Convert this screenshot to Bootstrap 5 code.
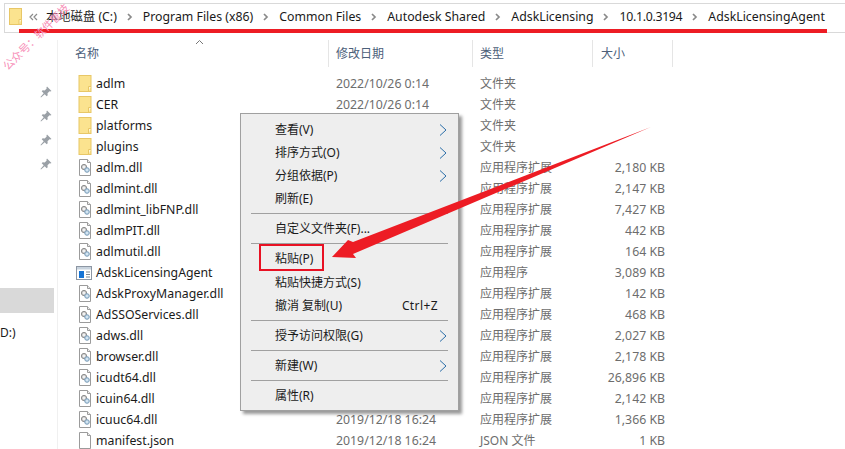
<!DOCTYPE html>
<html lang="zh">
<head>
<meta charset="utf-8">
<title>AdskLicensingAgent</title>
<link href="https://cdn.jsdelivr.net/npm/bootstrap@5.3.0/dist/css/bootstrap.min.css" rel="stylesheet">
<style>
html,body{height:449px;overflow:hidden;background:#fff}
body{font-family:"Noto Sans","Noto Sans CJK SC",sans-serif;font-size:12px;line-height:21px;color:#1a1a1a;position:relative}
.addr{margin:3px 0 0 4px;height:30px;border:1px solid #d9d9d9;border-right:0;padding:0 0 3px 4px;font-size:12.3px;color:#1a1a1a;white-space:nowrap}
.addr .fold{margin-right:7px}
.crumb-sep{width:6px;margin:0 10px;flex:none}
.crumb-first{width:9px;margin:0 8px 0 0;flex:none}
.crumb-ver{letter-spacing:-.3px}
.pane{height:416px}
.side{width:58px;flex:none;border-right:1px solid #f0f0f0;margin-top:7px;position:relative}
.pin-col{padding:46px 5px 0 0;gap:12px}
.pin-col svg{display:block}
.side-sel{height:25px;background:#d9d9d9;width:54px;margin-top:118px}
.side-d{margin-top:9px;line-height:21px}
.list{flex:1;min-width:0;margin-top:7px}
.head{height:27px;color:#4c607a;position:relative}
.cell-n{width:271px;padding-left:17px;flex:none}
.cell-d{width:144px;padding-left:7px;flex:none}
.cell-t{width:120px;padding-left:7px;flex:none}
.cell-s{width:80px;padding-right:8px;text-align:right;flex:none}
.head>div{border-right:1px solid #e5e5e5;height:27px;line-height:28px}
.caret-up{position:absolute;left:137px;top:-1px}
.rows{margin-top:6px}
.frow{height:21px;white-space:nowrap;font-size:12.3px}
.frow .cell-d,.frow .cell-t,.frow .cell-s{color:#6d6d6d}
.frow .cell-t{font-size:12px}
.frow .cell-n{display:flex;align-items:center;padding-left:20px}
.ico{width:14px;height:17px;flex:none;margin-right:4px}
.ico-app{width:16px;height:14px;margin-left:-2px;margin-right:4px;flex:none}
.cmenu{position:absolute;left:240px;top:113px;width:219px;height:298px;background:#eee;border:1px solid #a0a0a0;box-shadow:3px 3px 3px rgba(0,0,0,.4);padding:4px 0 0 0;z-index:2}
.mi{height:23px;line-height:22px;padding:0 11px 0 34px;display:flex;justify-content:space-between;align-items:center;color:#1a1a1a;white-space:nowrap}
.mi-tall{height:24px}
.shortcut{padding-right:9px;letter-spacing:.4px}
.msep{height:1px;background:#a0a0a0;margin:3px 10px}
.paste{position:absolute;left:18px;top:130px;width:65px;height:27px;border:2px solid #e81123;z-index:3}
.overlay{position:absolute;left:0;top:0;z-index:4;pointer-events:none}
.redline{position:absolute;left:19px;top:29px;width:808px;height:4px;background:#ed1c24;z-index:1}
.wm{position:absolute;left:5px;top:62px;transform-origin:0 50%;transform:rotate(-45deg);color:#f78fb8;font-size:11px;white-space:nowrap;z-index:5;line-height:12px}
</style>
</head>
<body>
<svg width="0" height="0" class="position-absolute">
  <symbol id="folder" viewBox="0 0 13 17"><rect x=".5" y=".5" width="12" height="16" fill="#fbe38f" stroke="#e8c767"/><path d="M10 16.500v-5h2.500" fill="#fff6d2" stroke="#e8c767"/></symbol>
  <symbol id="dll" viewBox="0 0 14 17"><path d="M1.500.5h8l3 3v13h-11z" fill="#fff" stroke="#9b9b9b"/><path d="M9.500.5v3h3" fill="#eee" stroke="#9b9b9b"/><circle cx="6" cy="8" r="2.600" fill="#d4d4d4" stroke="#8b8b8b"/><circle cx="6" cy="8" r=".9" fill="#fff"/><circle cx="9" cy="11" r="2.300" fill="#bcd6ea" stroke="#7f9fb8"/><circle cx="9" cy="11" r=".7" fill="#fff"/></symbol>
  <symbol id="doc" viewBox="0 0 14 17"><path d="M1.500.5h8l3 3v13h-11z" fill="#fff" stroke="#9b9b9b"/><path d="M9.500.5v3h3" fill="#eee" stroke="#9b9b9b"/></symbol>
  <symbol id="exe" viewBox="0 0 16 14"><rect x=".5" y=".5" width="15" height="13" fill="#fff" stroke="#8c96a3"/><rect x="1" y="1" width="14" height="2.500" fill="#c8d3de"/><rect x="3" y="5" width="5" height="7" fill="#1573d4"/><path d="M10 6h4M10 8.500h4M10 11h4" stroke="#7d8791"/></symbol>
  <symbol id="pin" viewBox="0 0 12 12"><path d="M7 .5l4.500 4.500-1.200.6-.8-.3-2 2 .2 2-1 1-2-2L1 11.500l-.5-.5 3.200-3.700-2-2 1-1 2 .2 2-2-.3-.8z" fill="#9aa0a6"/></symbol>
  <symbol id="mchev" viewBox="0 0 8 12"><path d="M1 .5L7 6l-6 5.500" fill="none" stroke="#2b6ea8" stroke-width="1"/></symbol>
  <symbol id="bchev" viewBox="0 0 6 8"><path d="M1 1l3 3-3 3" fill="none" stroke="#8a8a8a" stroke-width="1.700"/></symbol>
</svg>

<div class="addr d-flex align-items-center">
  <svg class="fold" width="13" height="17"><use href="#folder"/></svg>
  <svg class="crumb-first" viewBox="0 0 9 8" height="8"><path d="M4 1L1 4l3 3M8 1L5 4l3 3" fill="none" stroke="#8a8a8a" stroke-width="1.200"/></svg>
  <span>本地磁盘 (C:)</span>
  <svg class="crumb-sep" height="8"><use href="#bchev"/></svg><span>Program Files (x86)</span>
  <svg class="crumb-sep" height="8"><use href="#bchev"/></svg><span>Common Files</span>
  <svg class="crumb-sep" height="8"><use href="#bchev"/></svg><span>Autodesk Shared</span>
  <svg class="crumb-sep" height="8"><use href="#bchev"/></svg><span>AdskLicensing</span>
  <svg class="crumb-sep" height="8"><use href="#bchev"/></svg><span class="crumb-ver">10.1.0.3194</span>
  <svg class="crumb-sep" height="8"><use href="#bchev"/></svg><span>AdskLicensingAgent</span>
</div>
<div class="redline"></div>
<div class="wm">公众号：软件管技</div>

<div class="pane d-flex">
  <div class="side">
    <div class="pin-col d-flex flex-column align-items-end">
      <svg width="12" height="12"><use href="#pin"/></svg>
      <svg width="12" height="12"><use href="#pin"/></svg>
      <svg width="12" height="12"><use href="#pin"/></svg>
      <svg width="12" height="12"><use href="#pin"/></svg>
    </div>
    <div class="side-sel"></div>
    <div class="side-d">D:)</div>
  </div>
  <div class="list">
    <div class="head d-flex">
      <svg class="caret-up" width="9" height="6" viewBox="0 0 9 6"><path d="M1 5l3.500-3.500L8 5" fill="none" stroke="#777"/></svg>
      <div class="cell-n">名称</div>
      <div class="cell-d">修改日期</div>
      <div class="cell-t">类型</div>
      <div class="cell-s text-start ps-2">大小</div>
    </div>
    <div class="rows">
      <div class="frow d-flex"><div class="cell-n"><svg class="ico"><use href="#folder"/></svg>adlm</div><div class="cell-d">2022/10/26 0:14</div><div class="cell-t">文件夹</div><div class="cell-s"></div></div>
      <div class="frow d-flex"><div class="cell-n"><svg class="ico"><use href="#folder"/></svg>CER</div><div class="cell-d">2022/10/26 0:14</div><div class="cell-t">文件夹</div><div class="cell-s"></div></div>
      <div class="frow d-flex"><div class="cell-n"><svg class="ico"><use href="#folder"/></svg>platforms</div><div class="cell-d"></div><div class="cell-t">文件夹</div><div class="cell-s"></div></div>
      <div class="frow d-flex"><div class="cell-n"><svg class="ico"><use href="#folder"/></svg>plugins</div><div class="cell-d"></div><div class="cell-t">文件夹</div><div class="cell-s"></div></div>
      <div class="frow d-flex"><div class="cell-n"><svg class="ico"><use href="#dll"/></svg>adlm.dll</div><div class="cell-d"></div><div class="cell-t">应用程序扩展</div><div class="cell-s">2,180 KB</div></div>
      <div class="frow d-flex"><div class="cell-n"><svg class="ico"><use href="#dll"/></svg>adlmint.dll</div><div class="cell-d"></div><div class="cell-t">应用程序扩展</div><div class="cell-s">2,147 KB</div></div>
      <div class="frow d-flex"><div class="cell-n"><svg class="ico"><use href="#dll"/></svg>adlmint_libFNP.dll</div><div class="cell-d"></div><div class="cell-t">应用程序扩展</div><div class="cell-s">7,427 KB</div></div>
      <div class="frow d-flex"><div class="cell-n"><svg class="ico"><use href="#dll"/></svg>adlmPIT.dll</div><div class="cell-d"></div><div class="cell-t">应用程序扩展</div><div class="cell-s">442 KB</div></div>
      <div class="frow d-flex"><div class="cell-n"><svg class="ico"><use href="#dll"/></svg>adlmutil.dll</div><div class="cell-d"></div><div class="cell-t">应用程序扩展</div><div class="cell-s">164 KB</div></div>
      <div class="frow d-flex"><div class="cell-n"><svg class="ico-app"><use href="#exe"/></svg>AdskLicensingAgent</div><div class="cell-d"></div><div class="cell-t">应用程序</div><div class="cell-s">3,089 KB</div></div>
      <div class="frow d-flex"><div class="cell-n"><svg class="ico"><use href="#dll"/></svg>AdskProxyManager.dll</div><div class="cell-d"></div><div class="cell-t">应用程序扩展</div><div class="cell-s">142 KB</div></div>
      <div class="frow d-flex"><div class="cell-n"><svg class="ico"><use href="#dll"/></svg>AdSSOServices.dll</div><div class="cell-d"></div><div class="cell-t">应用程序扩展</div><div class="cell-s">468 KB</div></div>
      <div class="frow d-flex"><div class="cell-n"><svg class="ico"><use href="#dll"/></svg>adws.dll</div><div class="cell-d"></div><div class="cell-t">应用程序扩展</div><div class="cell-s">2,027 KB</div></div>
      <div class="frow d-flex"><div class="cell-n"><svg class="ico"><use href="#dll"/></svg>browser.dll</div><div class="cell-d"></div><div class="cell-t">应用程序扩展</div><div class="cell-s">2,178 KB</div></div>
      <div class="frow d-flex"><div class="cell-n"><svg class="ico"><use href="#dll"/></svg>icudt64.dll</div><div class="cell-d"></div><div class="cell-t">应用程序扩展</div><div class="cell-s">26,896 KB</div></div>
      <div class="frow d-flex"><div class="cell-n"><svg class="ico"><use href="#dll"/></svg>icuin64.dll</div><div class="cell-d"></div><div class="cell-t">应用程序扩展</div><div class="cell-s">2,142 KB</div></div>
      <div class="frow d-flex"><div class="cell-n"><svg class="ico"><use href="#dll"/></svg>icuuc64.dll</div><div class="cell-d">2019/12/18 16:24</div><div class="cell-t">应用程序扩展</div><div class="cell-s">1,366 KB</div></div>
      <div class="frow d-flex"><div class="cell-n"><svg class="ico"><use href="#doc"/></svg>manifest.json</div><div class="cell-d">2019/12/18 16:24</div><div class="cell-t">JSON 文件</div><div class="cell-s">1 KB</div></div>
    </div>
  </div>
</div>

<div class="cmenu">
  <div class="mi">查看(V)<svg width="8" height="12"><use href="#mchev"/></svg></div>
  <div class="mi">排序方式(O)<svg width="8" height="12"><use href="#mchev"/></svg></div>
  <div class="mi">分组依据(P)<svg width="8" height="12"><use href="#mchev"/></svg></div>
  <div class="mi">刷新(E)</div>
  <div class="msep"></div>
  <div class="mi">自定义文件夹(F)...</div>
  <div class="msep"></div>
  <div class="mi mi-tall">粘贴(P)</div>
  <div class="mi">粘贴快捷方式(S)</div>
  <div class="mi">撤消 复制(U)<span class="shortcut">Ctrl+Z</span></div>
  <div class="msep"></div>
  <div class="mi">授予访问权限(G)<svg width="8" height="12"><use href="#mchev"/></svg></div>
  <div class="msep"></div>
  <div class="mi">新建(W)<svg width="8" height="12"><use href="#mchev"/></svg></div>
  <div class="msep"></div>
  <div class="mi">属性(R)</div>
  <div class="paste"></div>
</div>

<svg class="overlay" width="845" height="449" viewBox="0 0 845 449">
  <polygon points="651,127 353,242 348,240 332,257 356,258 353,254" fill="#ed1c24"/>
</svg>
<script src="https://cdn.jsdelivr.net/npm/bootstrap@5.3.0/dist/js/bootstrap.bundle.min.js"></script>
</body>
</html>
